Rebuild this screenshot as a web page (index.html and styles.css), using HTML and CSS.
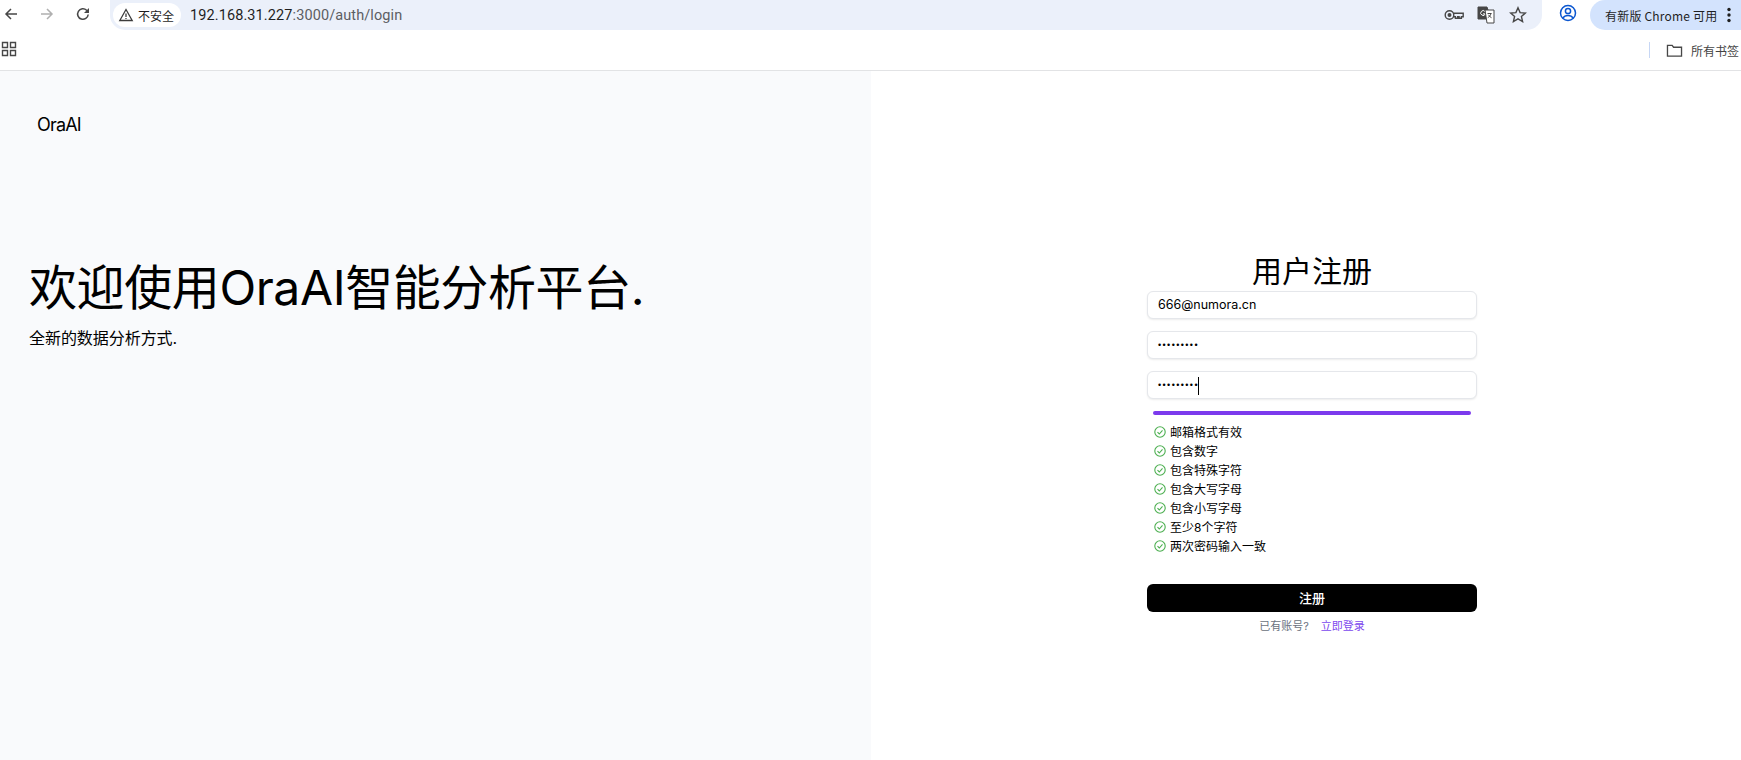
FILE: index.html
```html
<!DOCTYPE html>
<html lang="zh-CN">
<head>
<meta charset="utf-8">
<title>OraAI</title>
<link rel="stylesheet" href="styles.css">
</head>
<body>
<header class="chrome">
  <div class="toolbar">
    <svg class="nav nav-back" viewBox="0 0 16 16"><path d="M14 8H3M8 3 3 8l5 5"/></svg>
    <svg class="nav nav-fwd" viewBox="0 0 16 16"><path d="M2 8h11M8 3l5 5-5 5"/></svg>
    <svg class="nav nav-reload" viewBox="0 0 16 16"><path d="M13.2 8.5A5.3 5.3 0 1 1 11.6 4.2L13.5 6"/><path class="fill" d="M14 2v5H9z"/></svg>
    <div class="omnibox">
      <div class="chip">
        <svg class="warn" viewBox="0 0 16 16"><path d="M8 2.5 14.2 13.5H1.8z"/><path d="M8 6.5v3.6M8 11v1"/></svg>
        <span>不安全</span>
      </div>
      <span class="url">192.168.31.227<span class="url-dim">:3000/auth/login</span></span>
      <div class="omni-icons">
        <svg class="oi" viewBox="0 0 20 20"><circle cx="5.500" cy="10" r="4.300"/><circle cx="5.500" cy="10" r="1.300" class="fill"/><path d="M9.800 8.300H19.200v3.400h-1.800v1.500h-2.300v-1.500h-1.400v1.500h-2.300v-1.500H9.800"/></svg>
        <svg class="oi oi-tr" viewBox="0 0 20 20"><path class="fill" d="M2 2h9l1 3v9H2z"/><path class="white" d="M9 6.5a2.4 2.4 0 1 0 .4 2.4H7"/><path d="M9 5h9v13h-7z" class="paper"/><path d="M11.5 8.5h4M13.5 8v1M15 8.5c-.5 2-2 3.6-3.2 4.2M12.5 9.8c.6 1.2 1.6 2.2 3 2.9"/></svg>
        <svg class="oi" viewBox="0 0 20 20"><path d="M10 2.8 12.1 7.6l5.2.5-3.9 3.4 1.2 5.1L10 13.9l-4.600 2.700 1.200-5.100-3.900-3.400 5.200-.5z"/></svg>
      </div>
    </div>
    <svg class="avatar" viewBox="0 0 20 20"><circle cx="10" cy="10" r="7.500"/><circle cx="10" cy="8" r="2.600"/><path d="M4.800 15.200c1.200-2 3-2.800 5.200-2.800s4 .8 5.200 2.800"/></svg>
    <div class="update">
      <span>有新版 Chrome 可用</span>
      <svg class="dots" viewBox="0 0 4 16"><circle cx="2" cy="2.500" r="1.700"/><circle cx="2" cy="8" r="1.700"/><circle cx="2" cy="13.500" r="1.700"/></svg>
    </div>
  </div>
  <div class="bookmarks">
    <svg class="apps" viewBox="0 0 16 16"><path d="M1.500 1.500h5v5h-5zM9.500 1.500h5v5h-5zM1.500 9.500h5v5h-5zM9.500 9.500h5v5h-5z"/></svg>
    <div class="bm-right">
      <i class="bm-sep"></i>
      <svg class="folder" viewBox="0 0 18 16"><path d="M1.500 2.500h5l1.500 2h8.500v9.500h-15z"/></svg>
      <span class="bm-label">所有书签</span>
    </div>
  </div>
</header>
<main class="page">
  <section class="hero">
    <div class="brand">OraAI</div>
    <h1 class="hero-title">欢迎使用OraAI智能分析平台.</h1>
    <p class="hero-sub">全新的数据分析方式.</p>
  </section>
  <section class="panel">
    <form class="form">
      <h2 class="form-title">用户注册</h2>
      <div class="fields">
        <div class="field">666@numora.cn</div>
        <div class="field pw">•••••••••</div>
        <div class="field pw">•••••••••<i class="caret"></i></div>
      </div>
      <div class="strength"></div>
      <ul class="checks">
        <li><svg viewBox="0 0 12 12"><circle cx="6" cy="6" r="5.200"/><path d="M3.500 6.200 5.300 8 8.500 4.400"/></svg>邮箱格式有效</li>
        <li><svg viewBox="0 0 12 12"><circle cx="6" cy="6" r="5.200"/><path d="M3.500 6.200 5.300 8 8.500 4.400"/></svg>包含数字</li>
        <li><svg viewBox="0 0 12 12"><circle cx="6" cy="6" r="5.200"/><path d="M3.500 6.200 5.300 8 8.500 4.400"/></svg>包含特殊字符</li>
        <li><svg viewBox="0 0 12 12"><circle cx="6" cy="6" r="5.200"/><path d="M3.500 6.200 5.300 8 8.500 4.400"/></svg>包含大写字母</li>
        <li><svg viewBox="0 0 12 12"><circle cx="6" cy="6" r="5.200"/><path d="M3.500 6.200 5.300 8 8.500 4.400"/></svg>包含小写字母</li>
        <li><svg viewBox="0 0 12 12"><circle cx="6" cy="6" r="5.200"/><path d="M3.500 6.200 5.300 8 8.500 4.400"/></svg>至少8个字符</li>
        <li><svg viewBox="0 0 12 12"><circle cx="6" cy="6" r="5.200"/><path d="M3.500 6.200 5.300 8 8.500 4.400"/></svg>两次密码输入一致</li>
      </ul>
      <button class="submit" type="button">注册</button>
      <p class="foot"><span class="foot-q">已有账号?</span><a class="foot-link">立即登录</a></p>
    </form>
  </section>
</main>
</body>
</html>
```
FILE: styles.css
```css
* { box-sizing: border-box; }
html, body { margin: 0; height: 100%; }
body {
  width: 1741px; height: 760px; overflow: hidden; background: #fff; color: #000;
  font-family: Inter, "Noto Sans CJK SC", sans-serif;
  display: flex; flex-direction: column;
}
svg { display: block; flex: none; }
.chrome { flex: none; height: 71px; border-bottom: 1px solid #e2e3e5; font-family: "Noto Sans CJK SC", sans-serif; }
.toolbar { height: 30px; display: flex; align-items: flex-start; }
.nav { width: 16px; height: 16px; margin-top: 6px; fill: none; stroke: #474747; stroke-width: 1.500; }
.nav-back { margin-left: 3px; }
.nav-fwd { margin-left: 20px; stroke: #b0b0b0; }
.nav-reload { margin-left: 20px; }
.nav .fill { fill: #474747; stroke: none; }
.omnibox {
  margin-left: 19px; width: 1432px; height: 30px;
  background: #ebf0fa; border-radius: 0 0 15px 15px;
  display: flex; align-items: center; padding: 0 14px 0 3px;
}
.chip {
  display: flex; align-items: center; gap: 4px; height: 24px; padding: 0 7px 0 5px;
  background: #fff; border-radius: 12px; font-size: 12px; color: #1f1f1f;
}
.warn { width: 16px; height: 16px; fill: none; stroke: #3c3c3c; stroke-width: 1.300; }
.url { margin-left: 9px; font-family: Roboto, sans-serif; font-size: 14.500px; color: #1f1f1f; letter-spacing: .1px; }
.url-dim { color: #5b5e63; }
.omni-icons { margin-left: auto; display: flex; gap: 12px; align-items: center; }
.oi { width: 20px; height: 20px; fill: none; stroke: #474747; stroke-width: 1.400; }
.oi .fill { fill: #474747; }
.oi-tr .white { stroke: #fff; stroke-width: 1; }
.oi-tr .paper { fill: #fff; }
.oi-tr { stroke-width: 1; }
.avatar { width: 20px; height: 20px; margin: 3px 0 0 16px; fill: none; stroke: #0b57d0; stroke-width: 1.500; }
.update {
  margin-left: 12px; flex: 1; height: 30px; padding: 0 0 0 15px;
  background: #d3e3fd; border-radius: 15px 0 0 15px;
  display: flex; align-items: center; gap: 10px; font-size: 12px; color: #1f1f1f;
}
.update span { white-space: nowrap; letter-spacing: .2px; }
.dots { width: 4px; height: 16px; fill: #1f1f1f; }
.bookmarks { height: 40px; display: flex; align-items: center; }
.apps { width: 16px; height: 16px; margin: 0 0 2px 1px; fill: none; stroke: #474747; stroke-width: 1.400; }
.bm-right { margin-left: auto; display: flex; align-items: center; }
.bm-sep { width: 1px; height: 16px; background: #c7d7f5; margin-right: 16px; }
.folder { width: 17px; height: 15px; fill: none; stroke: #474747; stroke-width: 1.400; margin-right: 8px; }
.bm-label { font-size: 12px; color: #444; width: 49px; white-space: nowrap; margin-right: 1px; }
.page { flex: 1; display: flex; min-height: 0; }
.hero { width: 871px; flex: none; background: #f9fafc; padding: 40px 29px 0; }
.brand { font-size: 18px; line-height: 28px; margin-left: 8px; letter-spacing: -.8px; }
.hero-title { margin: 119px 0 0; font-size: 48px; line-height: 60px; font-weight: 400; white-space: nowrap; letter-spacing: -.4px; }
.hero-sub { margin: 8px 0 0; font-size: 16px; line-height: 24px; letter-spacing: -.05px; }
.panel { flex: 1; display: flex; justify-content: center; padding: 182px 0 0 12px; }
.form { width: 330px; display: flex; flex-direction: column; }
.form-title { margin: 0 0 2px; font-size: 30px; line-height: 36px; font-weight: 400; text-align: center; }
.fields { display: flex; flex-direction: column; gap: 12px; }
.field {
  height: 28px; border: 1px solid #e5e7eb; border-radius: 6px; background: #fff;
  box-shadow: 0 1px 2px rgba(0,0,0,.08); padding: 0 10px;
  font-size: 12.500px; line-height: 26px; color: #000; white-space: nowrap;
}
.pw { letter-spacing: 1.400px; font-size: 9px; font-family: "Liberation Sans", sans-serif; }
.caret { display: inline-block; width: 1px; height: 18px; background: #000; vertical-align: middle; margin-left: -1px; }
.strength { margin: 12px 6px 0; height: 4px; border-radius: 2px; background: #7c3aed; }
.checks { list-style: none; margin: 7px 0 0; padding: 0 0 0 7px; }
.checks li { display: flex; align-items: center; gap: 4px; height: 19px; font-size: 12px; color: #000; }
.checks svg { width: 12px; height: 12px; fill: none; stroke: #4caf50; stroke-width: 1.100; }
.submit {
  margin-top: 29px; height: 28px; border: 0; border-radius: 6px; background: #000; color: #fff;
  font: 500 13px/24px Inter, "Noto Sans CJK SC", sans-serif; padding: 0;
}
.foot { margin: 6px 0 0; text-align: center; font-size: 11px; line-height: 16px; display: flex; justify-content: center; gap: 12px; }
.foot-q { color: #6b7280; }
.foot-link { color: #8048ee; }
```
